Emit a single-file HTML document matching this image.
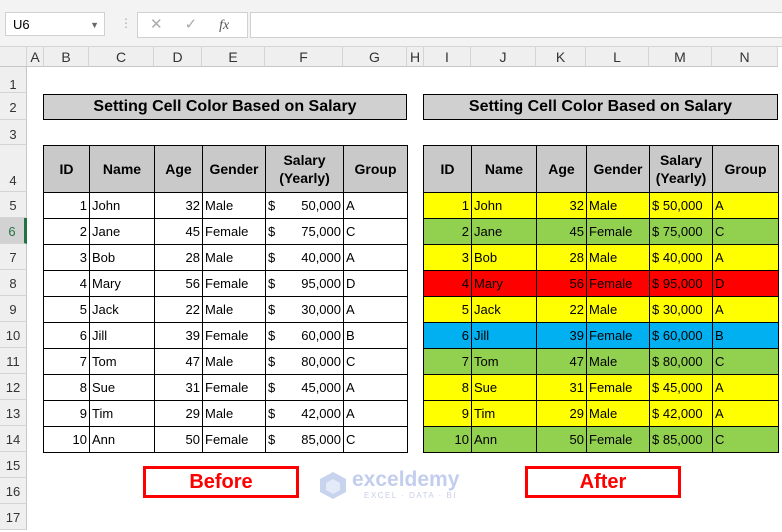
<!DOCTYPE html>
<html><head><meta charset="utf-8"><style>
body{margin:0;width:782px;height:517px;overflow:hidden;background:#fff;font-family:"Liberation Sans",sans-serif;position:relative}
.a{position:absolute}
.top{left:0;top:0;width:782px;height:46px;background:#f3f3f3;border-bottom:1px solid #d4d4d4}
.box{background:#fff;border:1px solid #d0d0d0}
.ch{top:47px;height:20px;background:#efefef;border-bottom:1px solid #c6c6c6;font-size:14px;color:#333;text-align:center;line-height:20px;border-right:1px solid #d4d4d4;box-sizing:border-box}
.rh{left:0;width:27px;background:#efefef;border-right:1px solid #c6c6c6;border-bottom:1px solid #d4d4d4;box-sizing:border-box;font-size:13px;color:#333;text-align:center}
table{position:absolute;border-collapse:collapse;font-family:"Liberation Sans",Calibri,sans-serif;font-size:13px;table-layout:fixed}
td{border:1px solid #000;height:26px;padding:0 2px;white-space:nowrap;overflow:hidden;color:#000;box-sizing:border-box}
th{border:1px solid #000;background:#c9c9c9;height:47px;font-weight:bold;font-size:14px;line-height:18px;box-sizing:border-box;padding:0}
.r{text-align:right}
.t{position:absolute;top:94px;height:24px;background:#d0d0d0;border:1px solid #000;font-weight:bold;font-size:16px;text-align:center;line-height:24px}
.y td{background:#ffff00}.g td{background:#92d050}.rd td{background:#ff0000}.b td{background:#00b0f0}
.lbl{position:absolute;top:466px;height:32px;border:3px solid #f00;box-sizing:border-box;color:#f00;font-weight:bold;font-size:20px;text-align:center;line-height:27px}
</style></head><body>
<div class="a top"></div>
<div class="a box" style="left:5px;top:12px;width:100px;height:24px;font-size:13px;line-height:24px;padding-left:7px;box-sizing:border-box">U6<span style="position:absolute;right:5px;font-size:9px;color:#666">▼</span></div>
<div class="a" style="left:120px;top:16px;color:#aaa;font-size:12px">⋮</div>
<div class="a box" style="left:137px;top:12px;width:109px;height:24px;color:#aaa;font-size:15px;line-height:24px"><span style="margin-left:12px">✕</span><span style="margin-left:22px">✓</span><span style="margin-left:22px;color:#555;font-style:italic;font-family:'Liberation Serif',serif;font-size:14px">fx</span></div>
<div class="a box" style="left:250px;top:12px;width:540px;height:24px"></div>
<div class="a ch" style="left:0;width:27px"></div>
<div class="a ch" style="left:27px;width:17px">A</div><div class="a ch" style="left:44px;width:45px">B</div><div class="a ch" style="left:89px;width:65px">C</div><div class="a ch" style="left:154px;width:48px">D</div><div class="a ch" style="left:202px;width:63px">E</div><div class="a ch" style="left:265px;width:78px">F</div><div class="a ch" style="left:343px;width:64px">G</div><div class="a ch" style="left:407px;width:17px">H</div><div class="a ch" style="left:424px;width:47px">I</div><div class="a ch" style="left:471px;width:65px">J</div><div class="a ch" style="left:536px;width:50px">K</div><div class="a ch" style="left:586px;width:63px">L</div><div class="a ch" style="left:649px;width:63px">M</div><div class="a ch" style="left:712px;width:66px">N</div>
<div class="a rh" style="top:67px;height:26px;line-height:36px">1</div>
<div class="a rh" style="top:93px;height:27px;line-height:30px">2</div>
<div class="a rh" style="top:120px;height:25px;line-height:30px">3</div>
<div class="a rh" style="top:145px;height:47px;line-height:72px">4</div>
<div class="a rh" style="top:192px;height:26px;line-height:28px">5</div>
<div class="a rh" style="top:218px;height:26px;line-height:28px;background:#d2d2d2;color:#217346;border-right:3px solid #217346">6</div>
<div class="a rh" style="top:244px;height:26px;line-height:28px">7</div>
<div class="a rh" style="top:270px;height:26px;line-height:28px">8</div>
<div class="a rh" style="top:296px;height:26px;line-height:28px">9</div>
<div class="a rh" style="top:322px;height:26px;line-height:28px">10</div>
<div class="a rh" style="top:348px;height:26px;line-height:28px">11</div>
<div class="a rh" style="top:374px;height:26px;line-height:28px">12</div>
<div class="a rh" style="top:400px;height:26px;line-height:28px">13</div>
<div class="a rh" style="top:426px;height:26px;line-height:28px">14</div>
<div class="a rh" style="top:452px;height:26px;line-height:28px">15</div>
<div class="a rh" style="top:478px;height:26px;line-height:28px">16</div>
<div class="a rh" style="top:504px;height:26px;line-height:28px">17</div>

<div class="t" style="left:43px;width:362px">Setting Cell Color Based on Salary</div>
<div class="t" style="left:423px;width:353px">Setting Cell Color Based on Salary</div>

<table style="left:43px;top:145px;width:364px">
<colgroup><col style="width:46px"><col style="width:65px"><col style="width:48px"><col style="width:63px"><col style="width:78px"><col style="width:64px"></colgroup>
<tr><th>ID</th><th>Name</th><th>Age</th><th>Gender</th><th>Salary<br>(Yearly)</th><th>Group</th></tr>
<tr><td class="r">1</td><td>John</td><td class="r">32</td><td>Male</td><td>$<span style="float:right">50,000</span></td><td>A</td></tr>
<tr><td class="r">2</td><td>Jane</td><td class="r">45</td><td>Female</td><td>$<span style="float:right">75,000</span></td><td>C</td></tr>
<tr><td class="r">3</td><td>Bob</td><td class="r">28</td><td>Male</td><td>$<span style="float:right">40,000</span></td><td>A</td></tr>
<tr><td class="r">4</td><td>Mary</td><td class="r">56</td><td>Female</td><td>$<span style="float:right">95,000</span></td><td>D</td></tr>
<tr><td class="r">5</td><td>Jack</td><td class="r">22</td><td>Male</td><td>$<span style="float:right">30,000</span></td><td>A</td></tr>
<tr><td class="r">6</td><td>Jill</td><td class="r">39</td><td>Female</td><td>$<span style="float:right">60,000</span></td><td>B</td></tr>
<tr><td class="r">7</td><td>Tom</td><td class="r">47</td><td>Male</td><td>$<span style="float:right">80,000</span></td><td>C</td></tr>
<tr><td class="r">8</td><td>Sue</td><td class="r">31</td><td>Female</td><td>$<span style="float:right">45,000</span></td><td>A</td></tr>
<tr><td class="r">9</td><td>Tim</td><td class="r">29</td><td>Male</td><td>$<span style="float:right">42,000</span></td><td>A</td></tr>
<tr><td class="r">10</td><td>Ann</td><td class="r">50</td><td>Female</td><td>$<span style="float:right">85,000</span></td><td>C</td></tr>
</table>

<table style="left:423px;top:145px;width:355px">
<colgroup><col style="width:48px"><col style="width:65px"><col style="width:50px"><col style="width:63px"><col style="width:63px"><col style="width:66px"></colgroup>
<tr><th>ID</th><th>Name</th><th>Age</th><th>Gender</th><th>Salary<br>(Yearly)</th><th>Group</th></tr>
<tr class="y"><td class="r">1</td><td>John</td><td class="r">32</td><td>Male</td><td>$ 50,000</td><td>A</td></tr>
<tr class="g"><td class="r">2</td><td>Jane</td><td class="r">45</td><td>Female</td><td>$ 75,000</td><td>C</td></tr>
<tr class="y"><td class="r">3</td><td>Bob</td><td class="r">28</td><td>Male</td><td>$ 40,000</td><td>A</td></tr>
<tr class="rd"><td class="r">4</td><td>Mary</td><td class="r">56</td><td>Female</td><td>$ 95,000</td><td>D</td></tr>
<tr class="y"><td class="r">5</td><td>Jack</td><td class="r">22</td><td>Male</td><td>$ 30,000</td><td>A</td></tr>
<tr class="b"><td class="r">6</td><td>Jill</td><td class="r">39</td><td>Female</td><td>$ 60,000</td><td>B</td></tr>
<tr class="g"><td class="r">7</td><td>Tom</td><td class="r">47</td><td>Male</td><td>$ 80,000</td><td>C</td></tr>
<tr class="y"><td class="r">8</td><td>Sue</td><td class="r">31</td><td>Female</td><td>$ 45,000</td><td>A</td></tr>
<tr class="y"><td class="r">9</td><td>Tim</td><td class="r">29</td><td>Male</td><td>$ 42,000</td><td>A</td></tr>
<tr class="g"><td class="r">10</td><td>Ann</td><td class="r">50</td><td>Female</td><td>$ 85,000</td><td>C</td></tr>
</table>

<div class="lbl" style="left:143px;width:156px">Before</div>
<div class="lbl" style="left:525px;width:156px">After</div>
<svg class="a" style="left:318px;top:470px" width="30" height="30" viewBox="0 0 30 30"><polygon points="15,2 28,9 28,22 15,29 2,22 2,9" fill="#c8d4ee"/><polygon points="15,9 22,13 22,20 15,24 8,20 8,13" fill="#e4eaf7"/></svg>
<div class="a" style="left:352px;top:468px;color:#c3cdee;font-weight:bold;font-size:21px">exceldemy</div>
<div class="a" style="left:364px;top:491px;color:#c8d0e8;font-size:8px;letter-spacing:1.5px">EXCEL · DATA · BI</div>
</body></html>
